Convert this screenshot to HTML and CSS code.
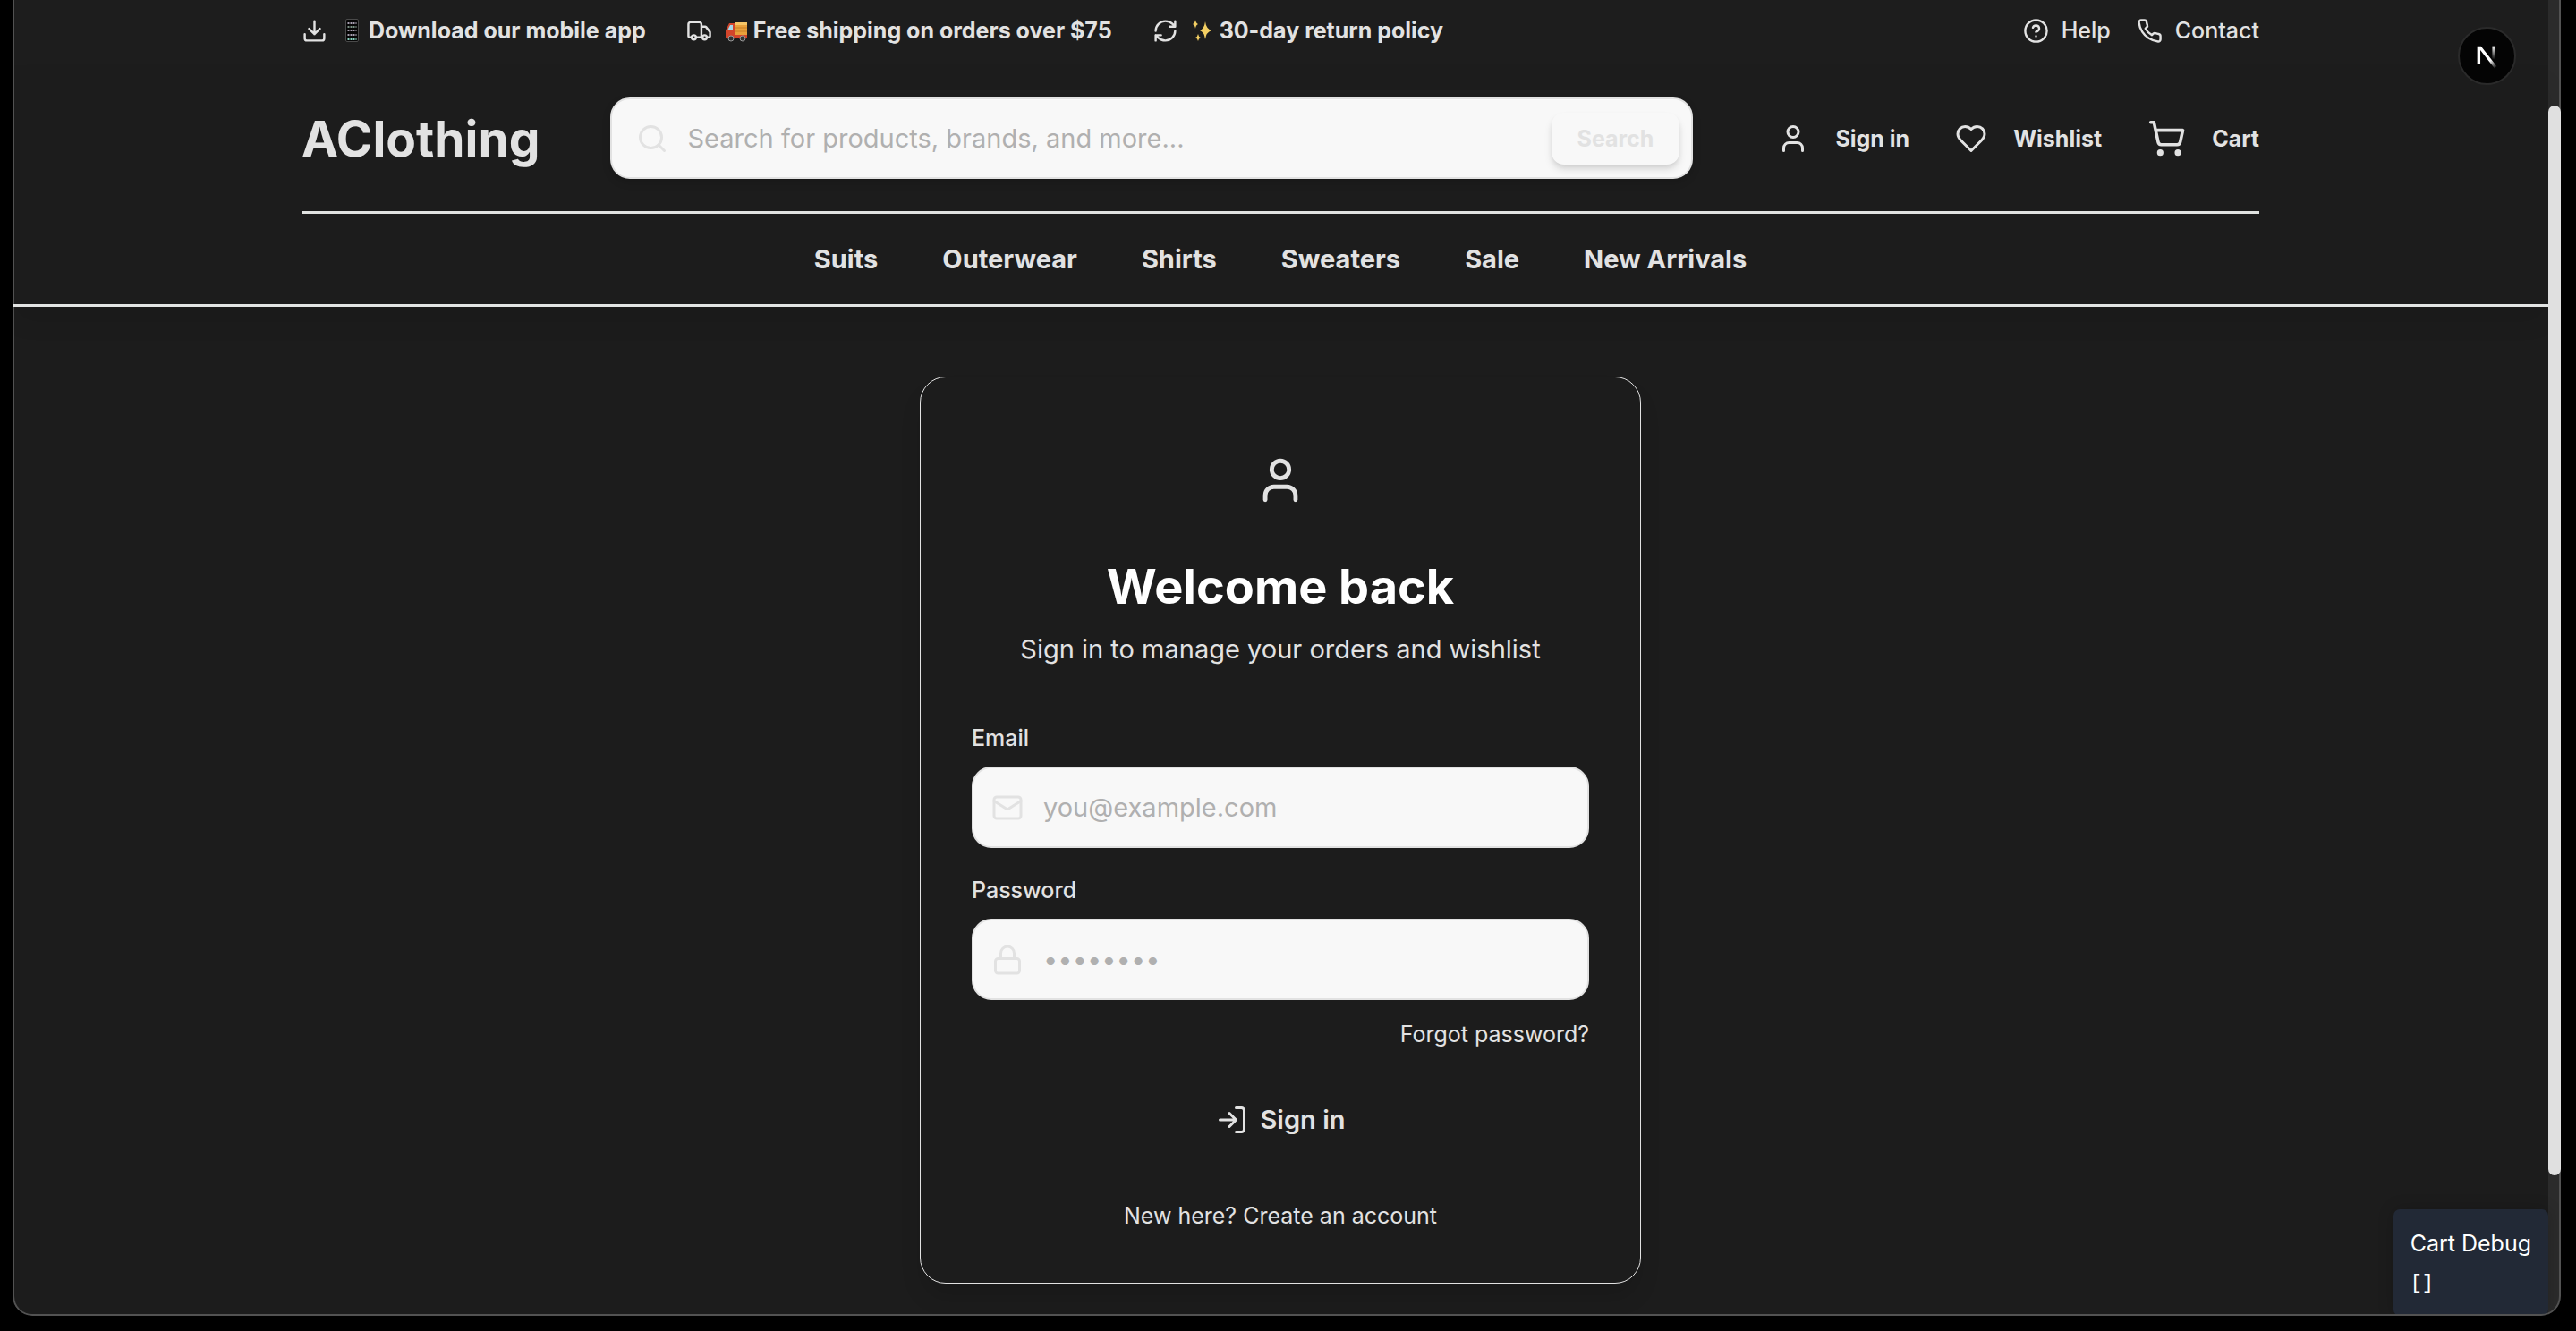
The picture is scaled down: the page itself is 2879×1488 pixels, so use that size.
FILE: index.html
```html
<!DOCTYPE html>
<html lang="en">
<head>
<meta charset="utf-8">
<title>AClothing - Sign in</title>
<link rel="stylesheet" href="styles.css">
</head>
<body>
<svg class="sprite" aria-hidden="true">
  <symbol id="user" viewBox="0 0 24 24"><path d="M19 21v-2a4 4 0 0 0-4-4H9a4 4 0 0 0-4 4v2"/><circle cx="12" cy="7" r="4"/></symbol>
</svg>
<div class="window">
  <div class="page">
    <div class="topbar">
      <div class="container topbar-row">
        <ul class="perks">
          <li><svg class="icon icon-s" viewBox="0 0 24 24"><path d="M21 15v4a2 2 0 0 1-2 2H5a2 2 0 0 1-2-2v-4M7 10l5 5 5-5M12 15V3"/></svg>
            <span class="perk-text"><svg class="emoji" viewBox="0 0 30 30"><rect x="6.500" y="2.500" width="14" height="25" rx="1.500" fill="#060606" stroke="#4a4a4a"/><path d="M8.500 7h10M8.500 15h10M8.500 20h10" stroke="#a79fb0" stroke-width="2" stroke-dasharray="2 1"/><path d="M8.500 11h10" stroke="#7a9084" stroke-width="2" stroke-dasharray="2 1"/><path d="M8.500 25h10" stroke="#88d4c0" stroke-width="2" stroke-dasharray="2 1"/></svg>Download our mobile app</span></li>
          <li><svg class="icon icon-s" viewBox="0 0 24 24"><path d="M14 18V6a2 2 0 0 0-2-2H4a2 2 0 0 0-2 2v11a1 1 0 0 0 1 1h2M15 18H9M19 18h2a1 1 0 0 0 1-1v-3.650a1 1 0 0 0-.22-.624l-3.480-4.350A1 1 0 0 0 17.520 8H14"/><circle cx="17" cy="18" r="2"/><circle cx="7" cy="18" r="2"/></svg>
            <span class="perk-text"><svg class="emoji" viewBox="0 0 30 30"><path d="M11 6h14v15H11z" fill="#e9a13b"/><path d="M11 6h14v3H11z" fill="#f6c667"/><path d="M11 12h14M11 16h14" stroke="#c97f26"/><path d="M11 7H5l-4 8v9h24v-4H11z" fill="#d2452b"/><path d="M9 9H6l-3 6h6z" fill="#a9d8ea"/><circle cx="7" cy="24" r="3" fill="#333" stroke="#999"/><circle cx="20" cy="24" r="3" fill="#333" stroke="#999"/></svg>Free shipping on orders over $75</span></li>
          <li><svg class="icon icon-s" viewBox="0 0 24 24"><path d="M3 12a9 9 0 0 1 9-9 9.750 9.750 0 0 1 6.740 2.740L21 8M21 3v5h-5M21 12a9 9 0 0 1-9 9 9.750 9.750 0 0 1-6.740-2.740L3 16M8 16H3v5"/></svg>
            <span class="perk-text"><svg class="emoji" viewBox="0 0 30 30"><path d="M16 5q1 8 7 10-6 2-7 10-1-8-6-10 5-2 6-10zM5 3q.5 4 3 5-2.500 1-3 5-.5-4-3-5 2.500-1 3-5zM8 19q.5 3 3 4-2.500 1-3 4-.5-3-3-4 2.500-1 3-4z" fill="#f3cf63"/></svg>30-day return policy</span></li>
        </ul>
        <nav class="support" aria-label="Support">
          <a href="#help"><svg class="icon icon-s" viewBox="0 0 24 24"><circle cx="12" cy="12" r="10"/><path d="M9.090 9a3 3 0 0 1 5.830 1c0 2-3 3-3 3M12 17h.01"/></svg>Help</a>
          <a href="#contact"><svg class="icon icon-s" viewBox="0 0 24 24"><path d="M22 16.920v3a2 2 0 0 1-2.180 2 19.790 19.790 0 0 1-8.630-3.070 19.500 19.500 0 0 1-6-6 19.790 19.790 0 0 1-3.070-8.670A2 2 0 0 1 4.110 2h3a2 2 0 0 1 2 1.720 12.840 12.840 0 0 0 .7 2.810 2 2 0 0 1-.45 2.110L8.090 9.910a16 16 0 0 0 6 6l1.270-1.270a2 2 0 0 1 2.110-.45 12.840 12.840 0 0 0 2.810.7A2 2 0 0 1 22 16.920z"/></svg>Contact</a>
        </nav>
      </div>
    </div>
    <header class="header">
      <div class="container">
        <div class="header-main">
          <a class="logo" href="#home">AClothing</a>
          <form class="search" role="search">
            <svg class="icon icon-m pale" viewBox="0 0 24 24"><circle cx="11" cy="11" r="8"/><path d="m21 21-4.300-4.300"/></svg>
            <input type="search" aria-label="Search" placeholder="Search for products, brands, and more...">
            <button type="button">Search</button>
          </form>
          <nav class="actions" aria-label="Account">
            <a href="#signin"><svg class="icon icon-m"><use href="#user"/></svg>Sign in</a>
            <a href="#wishlist"><svg class="icon icon-m" viewBox="0 0 24 24"><path d="M19 14c1.490-1.460 3-3.210 3-5.500A5.500 5.500 0 0 0 16.500 3c-1.760 0-3 .5-4.500 2-1.500-1.500-2.740-2-4.500-2A5.500 5.500 0 0 0 2 8.500c0 2.300 1.500 4.050 3 5.500l7 7Z"/></svg>Wishlist</a>
            <a href="#cart"><svg class="icon icon-l" viewBox="0 0 24 24"><circle cx="8" cy="21" r="1"/><circle cx="19" cy="21" r="1"/><path d="M2.050 2.050h2l2.660 12.420a2 2 0 0 0 2 1.580h9.780a2 2 0 0 0 1.950-1.570l1.650-7.430H5.120"/></svg>Cart</a>
          </nav>
        </div>
        <nav class="categories" aria-label="Categories">
          <a href="#suits">Suits</a><a href="#outerwear">Outerwear</a><a href="#shirts">Shirts</a><a href="#sweaters">Sweaters</a><a href="#sale">Sale</a><a href="#new">New Arrivals</a>
        </nav>
      </div>
    </header>
    <main class="main">
      <form class="card">
        <div class="avatar"><svg class="icon icon-xl"><use href="#user"/></svg></div>
        <h1>Welcome back</h1>
        <p class="subtitle">Sign in to manage your orders and wishlist</p>
        <label for="email">Email</label>
        <div class="field">
          <svg class="icon icon-m pale" viewBox="0 0 24 24"><rect x="2" y="4" width="20" height="16" rx="2"/><path d="m22 7-8.970 5.700a1.940 1.940 0 0 1-2.060 0L2 7"/></svg>
          <input id="email" type="email" placeholder="you@example.com">
        </div>
        <label for="password">Password</label>
        <div class="field">
          <svg class="icon icon-m pale" viewBox="0 0 24 24"><rect x="3" y="11" width="18" height="11" rx="2"/><path d="M7 11V7a5 5 0 0 1 10 0v4"/></svg>
          <input id="password" type="password" placeholder="••••••••">
        </div>
        <a class="forgot" href="#forgot">Forgot password?</a>
        <button class="submit" type="button"><svg class="icon icon-m" viewBox="0 0 24 24"><path d="M15 3h4a2 2 0 0 1 2 2v14a2 2 0 0 1-2 2h-4M10 17l5-5-5-5M15 12H3"/></svg>Sign in</button>
        <p class="signup">New here? <a href="#register">Create an account</a></p>
      </form>
    </main>
    <button class="dev-badge" type="button" aria-label="Open developer tools">
      <svg viewBox="0 0 36 36"><defs><linearGradient id="fade-a" gradientUnits="userSpaceOnUse" x1="20" y1="21" x2="24" y2="26"><stop stop-color="#fff"/><stop offset="1" stop-color="#fff" stop-opacity="0"/></linearGradient><linearGradient id="fade-b" x1="0" y1="0" x2="0" y2="1"><stop stop-color="#fff"/><stop offset="1" stop-color="#fff" stop-opacity="0"/></linearGradient></defs><path d="M11.600 11.600h2.500L24.500 25l-1.500 1.200L13.600 14.200v9.400h-2z" fill="url(#fade-a)"/><rect x="21.500" y="11.600" width="1.900" height="8.800" fill="url(#fade-b)"/></svg>
    </button>
    <aside class="debug"><h2>Cart Debug</h2><pre>[]</pre></aside>
  </div>
  <div class="scrollbar"><div class="thumb"></div></div>
</div>
</body>
</html>
```
FILE: styles.css
```css
* { box-sizing: border-box; }
body {
  margin: 0;
  padding: 0 17px 17px 14px;
  background: #000;
  color: #e2e2e2;
  font: 400 25px/36px Inter, "Liberation Sans", sans-serif;
}
a { color: inherit; text-decoration: none; }
h1, h2, p, ul, pre { margin: 0; padding: 0; }
button, input { font: inherit; border: 0; background: none; }
.sprite { position: absolute; width: 0; height: 0; }

/* Browser window */
.window {
  position: relative;
  display: flex;
  min-height: calc(100vh - 17px);
  overflow: hidden;
  background: #1c1c1c;
  border-radius: 0 0 22px 22px;
}
.window::after {
  content: "";
  position: absolute;
  inset: 0;
  z-index: 1;
  border: solid #525252;
  border-width: 0 2px 2px;
  border-radius: 0 0 22px 22px;
  pointer-events: none;
}
.page { position: relative; flex: 1; }
.scrollbar { width: 14px; padding: 118px 0 157px; display: flex; background: #2b2b2b; }
.thumb { position: relative; z-index: 2; flex: 1; border-radius: 7px; background: #e0e0e0; }

.container { max-width: 2304px; margin: 0 auto; padding: 0 58px; }

/* Icons */
.icon { flex: none; fill: none; stroke: currentColor; stroke-width: 2; stroke-linecap: round; stroke-linejoin: round; }
.icon-s { width: 29px; height: 29px; }
.icon-m { width: 36px; height: 36px; }
.icon-l { width: 43px; height: 43px; }
.icon-xl { width: 58px; height: 58px; }
.pale { color: #e2e2e2; }
.emoji { width: 30px; height: 30px; fill: none; }

/* Top bar */
.topbar { padding: 16px 0 21px; background: #1d1d1d; }
.topbar-row, .perks, .perks li, .perk-text, .support, .support a, .actions, .actions a { display: flex; align-items: center; }
.topbar-row { justify-content: space-between; }
.perks { gap: 45px; list-style: none; font-weight: 700; }
.perks li, .support a { gap: 14px; }
.perk-text { gap: 2px; }
.support { gap: 29px; font-weight: 500; }

/* Header */
.header {
  position: relative;
  z-index: 2;
  border-bottom: 3px solid #e2e4e3;
  box-shadow: 0 18px 27px -5px rgba(0, 0, 0, 0.1);
}
.header-main { display: flex; align-items: center; padding: 36px 0; border-bottom: 3px solid #e0e2e0; }
.logo { margin-right: 78px; font-size: 55px; line-height: 64px; font-weight: 700; }
.search, .field {
  display: flex;
  align-items: center;
  height: 91px;
  border: 2px solid #e2e2e2;
  background: #f8f8f8;
}
.search { flex: 1; padding: 0 13px 0 27px; border-radius: 22px; box-shadow: 0 4px 10px rgba(0, 0, 0, 0.15); }
.search input, .field input { flex: 1; min-width: 0; padding: 0; outline: 0; font-size: 29px; }
.search input { margin-left: 22px; }
::placeholder { color: #b0b0b0; opacity: 1; }
.search button {
  padding: 11px 29px;
  border-radius: 14px;
  color: #e2e2e2;
  font-weight: 700;
  background: #f8f8f8;
  box-shadow: 0 6px 10px -1px rgba(0, 0, 0, 0.13), 0 3px 6px -2px rgba(0, 0, 0, 0.1);
}
.actions { gap: 51px; margin-left: 94px; font-weight: 700; }
.actions a { gap: 29px; }
.categories { display: flex; justify-content: center; gap: 72px; padding: 29px 0; font-size: 29px; line-height: 43px; font-weight: 700; }

/* Sign-in card */
.main { display: flex; justify-content: center; padding: 78px 36px 35px; }
.card {
  display: flex;
  flex-direction: column;
  width: 806px;
  padding: 57px;
  border: 1px solid #e2e2e2;
  border-radius: 29px;
  box-shadow: 0 18px 27px -5px rgba(0, 0, 0, 0.15);
}
.avatar { display: grid; place-items: center; height: 115px; }
h1 { margin-top: 29px; color: #fff; font-size: 54px; line-height: 65px; font-weight: 700; text-align: center; }
.subtitle { margin: 16px 0 60px; font-size: 29px; line-height: 43px; text-align: center; }
.card label { margin-bottom: 14px; font-weight: 500; }
.field { padding: 0 20px; border-radius: 22px; }
.field input { margin-left: 22px; }
.field + label { margin-top: 29px; }
.forgot { align-self: flex-end; margin-top: 20px; }
.submit {
  display: flex;
  align-items: center;
  justify-content: center;
  gap: 14px;
  height: 94px;
  margin: 31px 0 42px;
  color: #e2e2e2;
  font-size: 29px;
  font-weight: 600;
}
.signup { text-align: center; }

/* Floating tools */
.dev-badge {
  position: absolute;
  z-index: 3;
  top: 30px;
  right: 36px;
  width: 65px;
  height: 65px;
  padding: 0;
  border: 2px solid #2a2a2a;
  border-radius: 50%;
  background: #040404;
}
.dev-badge svg { display: block; }
.debug {
  position: absolute;
  right: 0;
  bottom: 0;
  padding: 20px 19px 18px;
  border-radius: 7px;
  color: #fff;
  background: #222936;
  box-shadow: 0 0 18px rgba(0, 0, 0, 0.2);
}
.debug h2 { font-size: 25px; font-weight: 400; }
.debug pre { margin-top: 9px; font: 400 22px/36px "Liberation Mono", monospace; }
```
